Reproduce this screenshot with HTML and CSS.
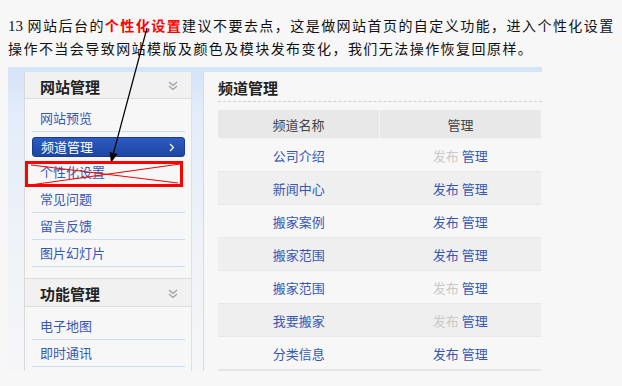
FILE: index.html
```html
<!DOCTYPE html>
<html lang="zh-CN">
<head>
  <meta charset="UTF-8" />
  <title>网站后台 - 个性化设置说明</title>
  <link rel="stylesheet" href="styles.css">
</head>
<body>
  <p class="intro"><span class="num">13</span> 网站后台的<b class="hl">个性化设置</b>建议不要去点，这是做网站首页的自定义功能，进入个性化设置<br>操作不当会导致网站模版及颜色及模块发布变化，我们无法操作恢复回原样。</p>

  <div class="shot">
    <div class="side">
      <div class="side-head">
        <span>网站管理</span>
        <svg class="fold" width="10" height="10" viewBox="0 0 10 10"><path d="M1 1l4 3.5L9 1M1 5l4 3.5L9 5" fill="none" stroke="#9c9c9c" stroke-width="1.2"/></svg>
      </div>
      <ul class="side-list">
        <li>网站预览</li>
        <li class="active">
          <div class="bar">
            <span>频道管理</span>
            <svg width="6" height="9" viewBox="0 0 6 9"><path d="M1 1l3.5 3.5L1 8" fill="none" stroke="#fff" stroke-width="1.2"/></svg>
          </div>
        </li>
        <li>个性化设置</li>
        <li>常见问题</li>
        <li>留言反馈</li>
        <li>图片幻灯片</li>
      </ul>

      <div class="side-head sec">
        <span>功能管理</span>
        <svg class="fold" width="10" height="10" viewBox="0 0 10 10"><path d="M1 1l4 3.5L9 1M1 5l4 3.5L9 5" fill="none" stroke="#9c9c9c" stroke-width="1.2"/></svg>
      </div>
      <ul class="side-list">
        <li>电子地图</li>
        <li>即时通讯</li>
      </ul>
    </div>

    <div class="main">
      <h2>频道管理</h2>
      <table class="channels">
        <tr><th class="col-name">频道名称</th><th>管理</th></tr>
        <tr><td>公司介绍</td><td><span class="off">发布</span> 管理</td></tr>
        <tr class="alt"><td>新闻中心</td><td>发布 管理</td></tr>
        <tr><td>搬家案例</td><td>发布 管理</td></tr>
        <tr class="alt"><td>搬家范围</td><td>发布 管理</td></tr>
        <tr><td>搬家范围</td><td><span class="off">发布</span> 管理</td></tr>
        <tr class="alt"><td>我要搬家</td><td><span class="off">发布</span> 管理</td></tr>
        <tr class="last"><td>分类信息</td><td>发布 管理</td></tr>
      </table>
    </div>
  </div>

  <!-- annotation drawn over the screenshot -->
  <svg class="marks" width="622" height="386" viewBox="0 0 622 386">
    <line x1="147" y1="28" x2="113.5" y2="153" stroke="#000" stroke-width="1.2"/>
    <polygon points="111,163 117.4,154 109.6,152" fill="#000"/>
    <rect x="26.5" y="162.5" width="155" height="23" fill="none" stroke="#f00" stroke-width="3"/>
    <line x1="30" y1="185" x2="180" y2="164" stroke="#f00" stroke-width="1"/>
    <line x1="31" y1="165" x2="178" y2="183" stroke="#f00" stroke-width="1"/>
  </svg>
</body>
</html>
```

FILE: styles.css
```css
body {
  margin: 0;
  position: relative;
  height: 386px;
  overflow: hidden;
  background: #f7f7f7;
  font-family: "Noto Sans CJK SC", sans-serif;
  color: #111;
}

.intro {
  margin: 0;
  padding: 14px 0 0 8px;
  font-size: 14px;
  line-height: 22px;
  letter-spacing: 1.45px;
  white-space: nowrap;
}

.num {
  font-family: "Liberation Serif", serif;
  font-size: 15px;
  letter-spacing: 0;
}

.hl {
  color: #f00;
}

.shot {
  margin: 8px 0 0 8px;
  width: 534px;
  height: 304px;
  box-sizing: border-box;
  padding: 5px 0 0 16px;
  display: flex;
  gap: 11px;
  background: linear-gradient(#d6e4f8, #d6e4f8 6px, #e3ecf9 15%, #eef2f8 55%, #f5f6f8);
}

.side {
  width: 168px;
  box-sizing: border-box;
  background: #f7f7f7;
  border-left: 1px solid #dadada;
  border-right: 1px solid #e0e0e0;
}

.side-head {
  height: 27px;
  box-sizing: border-box;
  padding: 2px 13px 0 15px;
  display: flex;
  align-items: center;
  justify-content: space-between;
  font-size: 15px;
  font-weight: bold;
  color: #222;
  background: #f1f1f1;
  border-bottom: 1px solid #dcdcdc;
}

.side-head.sec {
  height: 29px;
  margin-top: 11px;
  border-top: 1px solid #dcdcdc;
}

.side-list {
  list-style: none;
  margin: 0;
  padding: 6px 6px 0 7px;
}

.side-list li {
  height: 26px;
  line-height: 26px;
  padding-left: 8px;
  font-size: 13px;
  color: #3658b5;
  border-bottom: 1px solid #cfdbf1;
}

.side-list li.active {
  height: 27px;
  padding: 5px 0 0;
  box-sizing: border-box;
  border-bottom: none;
}

.bar {
  height: 20px;
  box-sizing: border-box;
  padding: 0 9px 0 8px;
  display: flex;
  align-items: center;
  justify-content: space-between;
  line-height: 20px;
  color: #fff;
  border-radius: 3px;
  border: 1px solid #173d92;
  background: linear-gradient(#2c5bc2, #1d45a2);
}

.main {
  flex: 1;
  background: #f7f7f7;
  border-left: 1px solid #dadada;
  padding-left: 14px;
}

.main h2 {
  margin: 0;
  height: 29px;
  line-height: 31px;
  font-size: 15px;
  color: #222;
  border-bottom: 1px dashed #cfcfcf;
}

.channels {
  margin-top: 8px;
  width: 323px;
  border-collapse: collapse;
  font-size: 13px;
}

.channels th {
  height: 28px;
  padding: 0;
  font-weight: normal;
  color: #444;
  background: #e8e8e8;
  border-bottom: 1px solid #f3f3f3;
}

.channels th.col-name {
  width: 161px;
  border-right: 1px solid #f4f4f4;
}

.channels td {
  height: 32px;
  padding: 0;
  text-align: center;
  color: #3658b5;
}

.channels tr.alt td {
  background: #efefef;
  border-top: 1px solid #e8e8e8;
  border-bottom: 1px solid #e8e8e8;
}

.channels tr.last td {
  border-bottom: 2px solid #e6e6e6;
}

.off {
  color: #c9c9c9;
}

.marks {
  position: absolute;
  top: 0;
  left: 0;
  pointer-events: none;
}
```
